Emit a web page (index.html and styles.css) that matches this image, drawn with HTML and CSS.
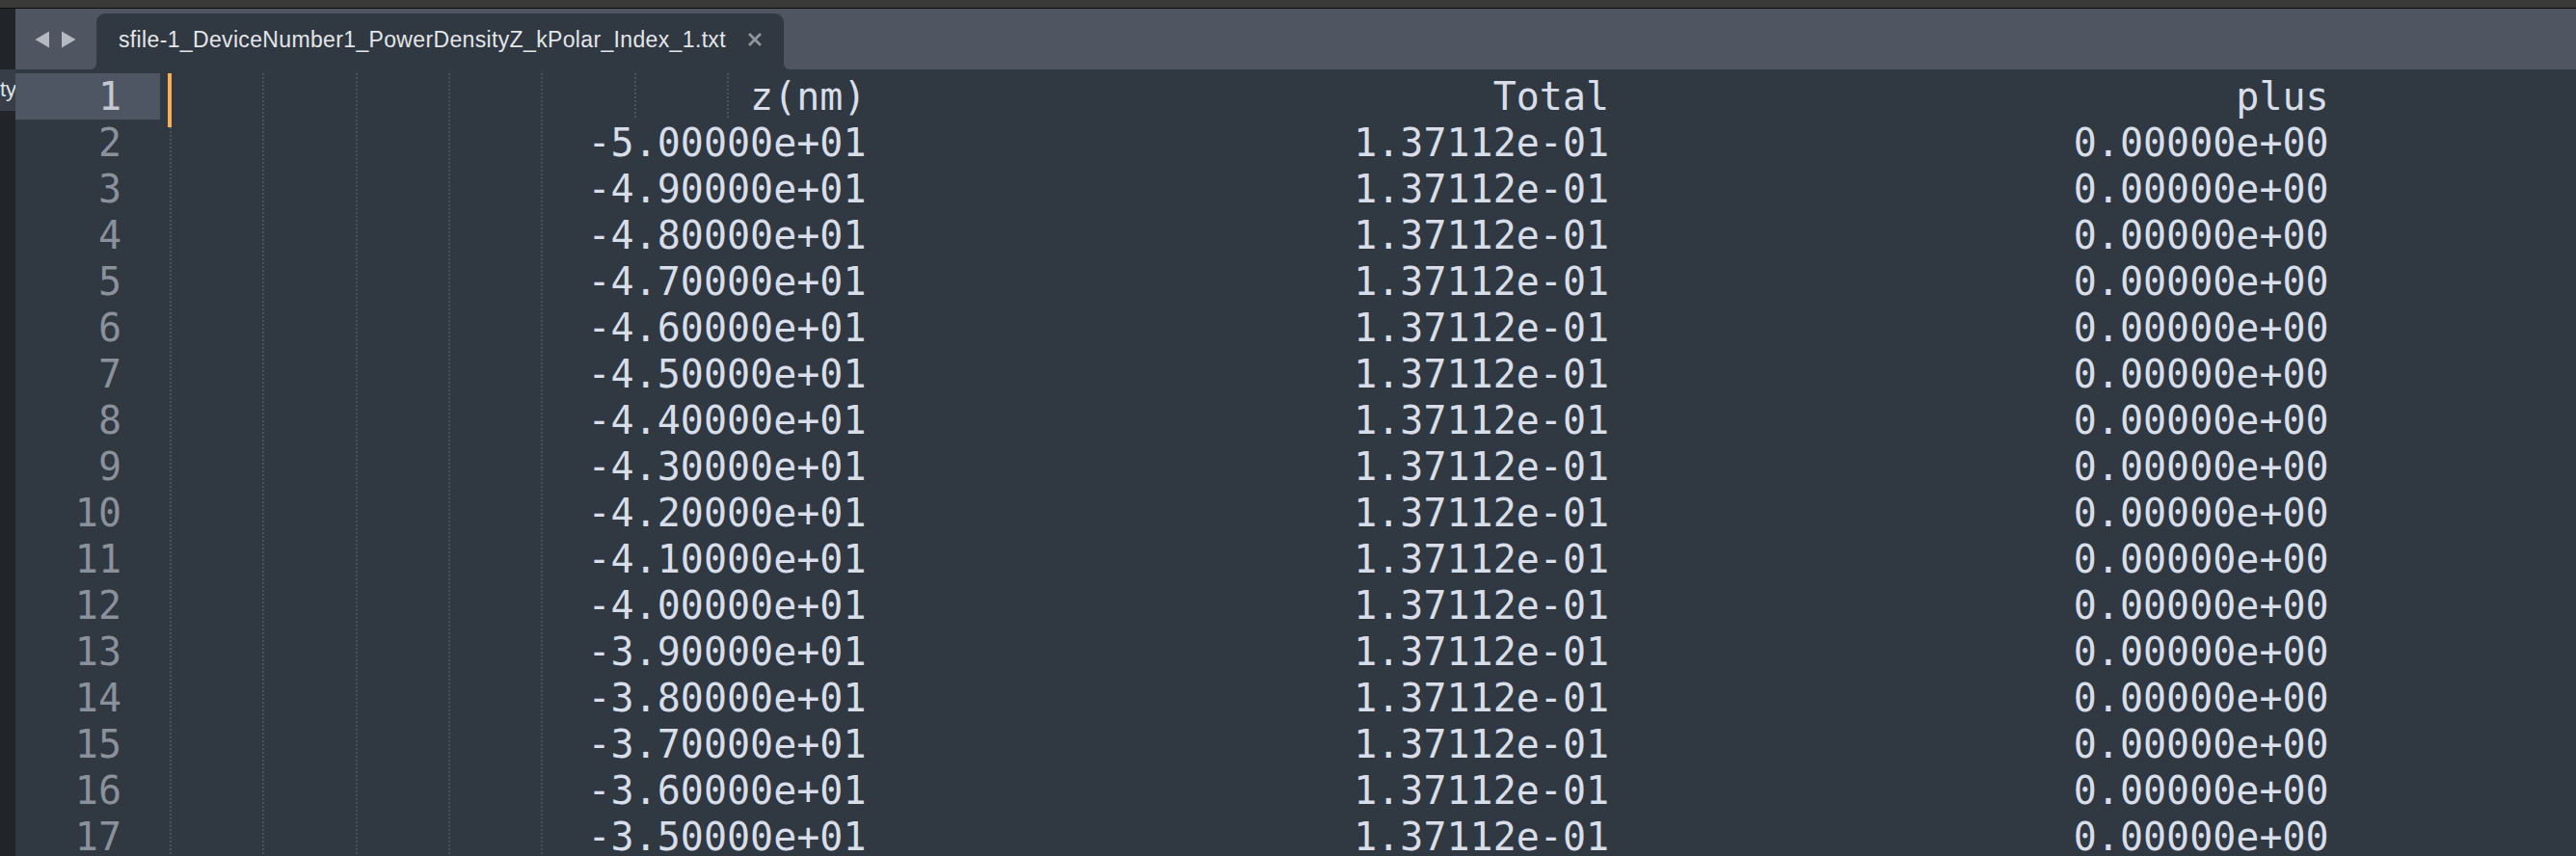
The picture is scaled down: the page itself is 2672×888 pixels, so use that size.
FILE: index.html
```html
<!DOCTYPE html>
<html lang="en">
<head>
<meta charset="utf-8">
<title>sfile-1_DeviceNumber1_PowerDensityZ_kPolar_Index_1.txt</title>
<link rel="stylesheet" href="styles.css">
</head>
<body>
<div class="topbar"></div>
<div class="main">
  <aside class="sidebar">
    <div class="side-item"><span>ty</span></div>
  </aside>
  <div class="workspace">
    <div class="tabbar">
      <div class="tab-nav">
        <svg class="nav-arrow" width="16" height="18" viewBox="0 0 16 18"><path d="M15 0.5 L15 17.5 L0.5 9 Z" fill="#b5bac0"/></svg>
        <svg class="nav-arrow" width="16" height="18" viewBox="0 0 16 18"><path d="M1 0.5 L1 17.5 L15.5 9 Z" fill="#b5bac0"/></svg>
      </div>
      <div class="tab-slot">
        <div class="tab">
          <span class="tab-title">sfile-1_DeviceNumber1_PowerDensityZ_kPolar_Index_1.txt</span>
          <svg class="tab-close" width="14" height="14" viewBox="0 0 14 14"><path d="M2 2 L12 12 M12 2 L2 12" stroke="#90969d" stroke-width="2.8" stroke-linecap="square"/></svg>
        </div>
      </div>
      <div class="tab-rest"></div>
    </div>
    <div class="editor">
      <div class="gutter">
        <div class="ln current">1</div>
        <div class="ln">2</div>
        <div class="ln">3</div>
        <div class="ln">4</div>
        <div class="ln">5</div>
        <div class="ln">6</div>
        <div class="ln">7</div>
        <div class="ln">8</div>
        <div class="ln">9</div>
        <div class="ln">10</div>
        <div class="ln">11</div>
        <div class="ln">12</div>
        <div class="ln">13</div>
        <div class="ln">14</div>
        <div class="ln">15</div>
        <div class="ln">16</div>
        <div class="ln">17</div>
      </div>
      <div class="code">
        <span class="caret"></span>
        <div class="line"><span class="ind">    </span><span class="ind">    </span><span class="ind">    </span><span class="ind">    </span><span class="ind">    </span><span class="ind">    </span><span class="ind one"> </span>z(nm)                           Total                           plus</div>
        <div class="line"><span class="ind">    </span><span class="ind">    </span><span class="ind">    </span><span class="ind">    </span><span class="ind two">  </span>-5.00000e+01                     1.37112e-01                    0.00000e+00</div>
        <div class="line"><span class="ind">    </span><span class="ind">    </span><span class="ind">    </span><span class="ind">    </span><span class="ind two">  </span>-4.90000e+01                     1.37112e-01                    0.00000e+00</div>
        <div class="line"><span class="ind">    </span><span class="ind">    </span><span class="ind">    </span><span class="ind">    </span><span class="ind two">  </span>-4.80000e+01                     1.37112e-01                    0.00000e+00</div>
        <div class="line"><span class="ind">    </span><span class="ind">    </span><span class="ind">    </span><span class="ind">    </span><span class="ind two">  </span>-4.70000e+01                     1.37112e-01                    0.00000e+00</div>
        <div class="line"><span class="ind">    </span><span class="ind">    </span><span class="ind">    </span><span class="ind">    </span><span class="ind two">  </span>-4.60000e+01                     1.37112e-01                    0.00000e+00</div>
        <div class="line"><span class="ind">    </span><span class="ind">    </span><span class="ind">    </span><span class="ind">    </span><span class="ind two">  </span>-4.50000e+01                     1.37112e-01                    0.00000e+00</div>
        <div class="line"><span class="ind">    </span><span class="ind">    </span><span class="ind">    </span><span class="ind">    </span><span class="ind two">  </span>-4.40000e+01                     1.37112e-01                    0.00000e+00</div>
        <div class="line"><span class="ind">    </span><span class="ind">    </span><span class="ind">    </span><span class="ind">    </span><span class="ind two">  </span>-4.30000e+01                     1.37112e-01                    0.00000e+00</div>
        <div class="line"><span class="ind">    </span><span class="ind">    </span><span class="ind">    </span><span class="ind">    </span><span class="ind two">  </span>-4.20000e+01                     1.37112e-01                    0.00000e+00</div>
        <div class="line"><span class="ind">    </span><span class="ind">    </span><span class="ind">    </span><span class="ind">    </span><span class="ind two">  </span>-4.10000e+01                     1.37112e-01                    0.00000e+00</div>
        <div class="line"><span class="ind">    </span><span class="ind">    </span><span class="ind">    </span><span class="ind">    </span><span class="ind two">  </span>-4.00000e+01                     1.37112e-01                    0.00000e+00</div>
        <div class="line"><span class="ind">    </span><span class="ind">    </span><span class="ind">    </span><span class="ind">    </span><span class="ind two">  </span>-3.90000e+01                     1.37112e-01                    0.00000e+00</div>
        <div class="line"><span class="ind">    </span><span class="ind">    </span><span class="ind">    </span><span class="ind">    </span><span class="ind two">  </span>-3.80000e+01                     1.37112e-01                    0.00000e+00</div>
        <div class="line"><span class="ind">    </span><span class="ind">    </span><span class="ind">    </span><span class="ind">    </span><span class="ind two">  </span>-3.70000e+01                     1.37112e-01                    0.00000e+00</div>
        <div class="line"><span class="ind">    </span><span class="ind">    </span><span class="ind">    </span><span class="ind">    </span><span class="ind two">  </span>-3.60000e+01                     1.37112e-01                    0.00000e+00</div>
        <div class="line"><span class="ind">    </span><span class="ind">    </span><span class="ind">    </span><span class="ind">    </span><span class="ind two">  </span>-3.50000e+01                     1.37112e-01                    0.00000e+00</div>
      </div>
    </div>
  </div>
</div>
</body>
</html>
```
FILE: styles.css
```css
html, body {
  margin: 0;
  padding: 0;
}
body {
  width: 2672px;
  height: 888px;
  overflow: hidden;
  background: #303841;
  font-family: "Liberation Sans", Arial, sans-serif;
}
.topbar {
  height: 8px;
  background: #3a3a38;
  border-bottom: 1px solid #0d0d0d;
}
.main {
  display: flex;
  height: 879px;
  overflow: hidden;
}
.sidebar {
  width: 16px;
  flex: 0 0 16px;
  background: #212428;
  padding-top: 63px;
  box-sizing: border-box;
}
.side-item {
  height: 43px;
  background: #383e48;
  display: flex;
  justify-content: flex-end;
  align-items: center;
  overflow: hidden;
  color: #dfe3e8;
  font-size: 22px;
  padding-bottom: 2px;
  box-sizing: border-box;
}
.side-item span {
  white-space: nowrap;
  margin-right: -1px;
}
.workspace {
  flex: 1;
  display: flex;
  flex-direction: column;
  min-width: 0;
}
.tabbar {
  display: flex;
  flex: 0 0 63px;
  height: 63px;
  background: #303841;
}
.tab-nav {
  width: 84px;
  flex: 0 0 84px;
  background: #4f5661;
  border-bottom-right-radius: 6px;
  display: flex;
  align-items: flex-start;
  gap: 11px;
  padding: 23px 0 0 20px;
  box-sizing: border-box;
}
.nav-arrow {
  display: block;
}
.tab-slot {
  background: #4f5661;
  display: flex;
  padding-top: 5px;
}
.tab {
  width: 713px;
  background: #303841;
  border-radius: 9px 9px 0 0;
  display: flex;
  align-items: center;
  padding: 0 0 4px 23px;
  box-sizing: border-box;
}
.tab-title {
  color: #e3e6ea;
  font-size: 23px;
  white-space: nowrap;
  letter-spacing: 0.35px;
}
.tab-close {
  display: block;
  margin-left: auto;
  margin-right: 23px;
}
.tab-rest {
  flex: 1;
  background: #4f5661;
  border-bottom-left-radius: 6px;
}
.editor {
  display: flex;
  padding-top: 4px;
  font-family: "DejaVu Sans Mono", monospace;
  font-size: 40px;
  line-height: 48px;
}
.gutter {
  width: 160px;
  flex: 0 0 160px;
}
.ln {
  width: 150px;
  height: 48px;
  box-sizing: border-box;
  padding-right: 40px;
  text-align: right;
  color: #8a919b;
}
.ln.current {
  background: #4e5663;
  color: #c3c8d0;
}
.code {
  position: relative;
  color: #d8dee9;
}
.line {
  height: 48px;
  white-space: pre;
}
.ind {
  display: inline-block;
  height: 48px;
  vertical-align: top;
  background: repeating-linear-gradient(to bottom, #4b535e 0 2px, transparent 2px 4px) left top / 2px 100% no-repeat;
}
.caret {
  position: absolute;
  left: -2px;
  top: 0;
  width: 4px;
  height: 56px;
  background: #f9ae58;
  z-index: 1;
}
```
